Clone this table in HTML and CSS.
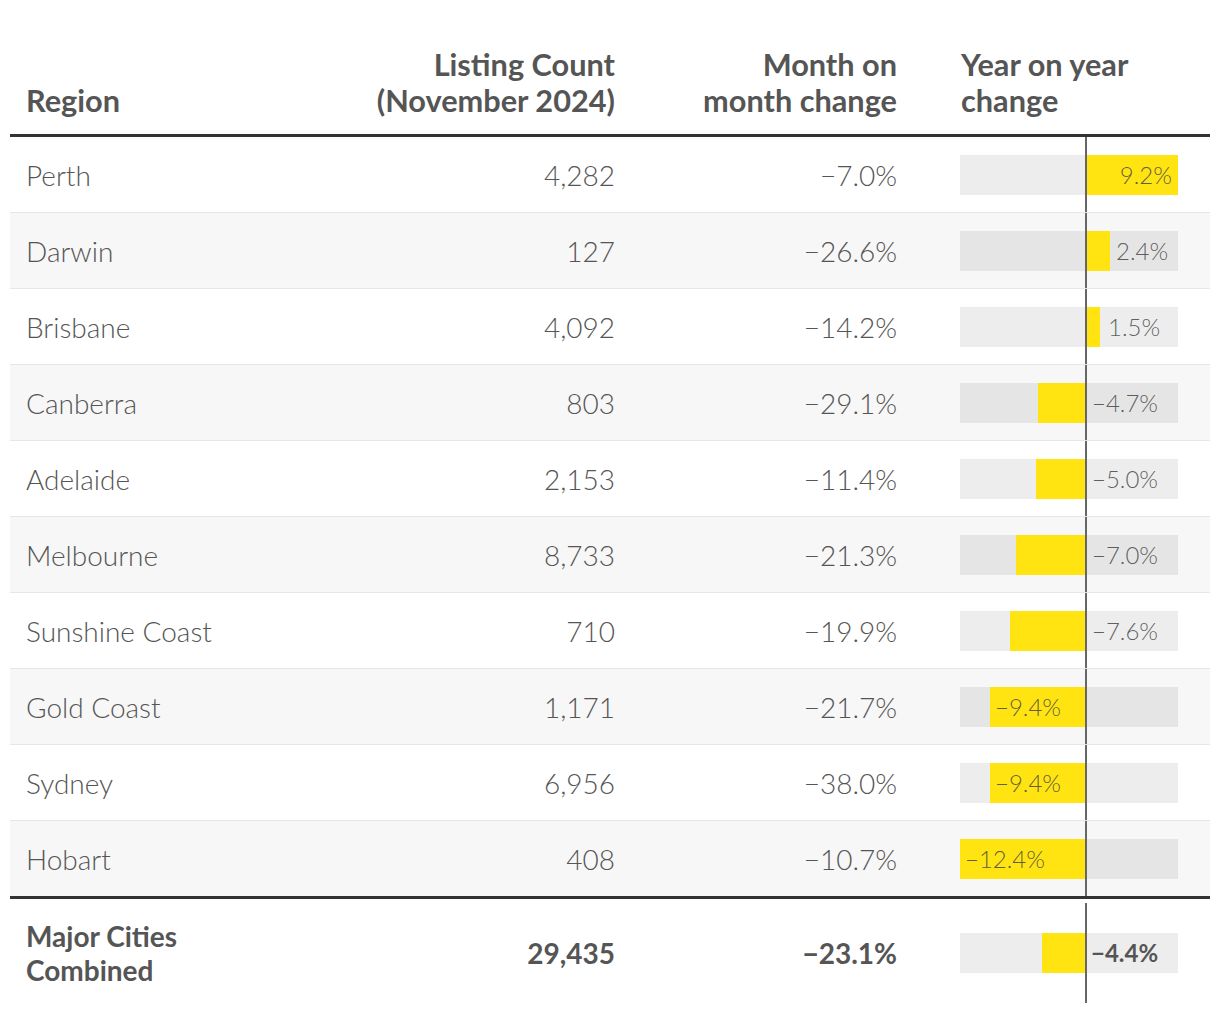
FILE: index.html
```html
<!DOCTYPE html>
<html lang="en">
<head>
<meta charset="utf-8">
<title>Listing Count by Region</title>
<link rel="stylesheet" href="styles.css">
</head>
<body>
<div class="wrap">
<table class="tbl">
  <colgroup>
    <col class="w1"><col class="w2"><col class="w3"><col class="w4">
  </colgroup>
  <thead>
    <tr>
      <th class="region">Region</th>
      <th class="num">Listing Count<br>(November 2024)</th>
      <th class="num">Month on<br>month change</th>
      <th class="yoyh">Year on year<br>change</th>
    </tr>
  </thead>
  <tbody>
    <tr>
      <td class="region">Perth</td><td class="num">4,282</td><td class="num">−7.0%</td>
      <td class="yoy"><div class="bar"><div class="fill" style="left:127px;width:91px"></div><span class="lbl" style="right:6px">9.2%</span></div></td>
    </tr>
    <tr>
      <td class="region">Darwin</td><td class="num">127</td><td class="num">−26.6%</td>
      <td class="yoy"><div class="bar"><div class="fill" style="left:127px;width:23px"></div><span class="lbl" style="left:156px">2.4%</span></div></td>
    </tr>
    <tr>
      <td class="region">Brisbane</td><td class="num">4,092</td><td class="num">−14.2%</td>
      <td class="yoy"><div class="bar"><div class="fill" style="left:127px;width:13px"></div><span class="lbl" style="left:148px">1.5%</span></div></td>
    </tr>
    <tr>
      <td class="region">Canberra</td><td class="num">803</td><td class="num">−29.1%</td>
      <td class="yoy"><div class="bar"><div class="fill" style="left:78px;width:49px"></div><span class="lbl" style="left:132px">−4.7%</span></div></td>
    </tr>
    <tr>
      <td class="region">Adelaide</td><td class="num">2,153</td><td class="num">−11.4%</td>
      <td class="yoy"><div class="bar"><div class="fill" style="left:76px;width:51px"></div><span class="lbl" style="left:132px">−5.0%</span></div></td>
    </tr>
    <tr>
      <td class="region">Melbourne</td><td class="num">8,733</td><td class="num">−21.3%</td>
      <td class="yoy"><div class="bar"><div class="fill" style="left:56px;width:71px"></div><span class="lbl" style="left:132px">−7.0%</span></div></td>
    </tr>
    <tr>
      <td class="region">Sunshine Coast</td><td class="num">710</td><td class="num">−19.9%</td>
      <td class="yoy"><div class="bar"><div class="fill" style="left:50px;width:77px"></div><span class="lbl" style="left:132px">−7.6%</span></div></td>
    </tr>
    <tr>
      <td class="region">Gold Coast</td><td class="num">1,171</td><td class="num">−21.7%</td>
      <td class="yoy"><div class="bar"><div class="fill" style="left:30px;width:97px"></div><span class="lbl" style="left:35px">−9.4%</span></div></td>
    </tr>
    <tr>
      <td class="region">Sydney</td><td class="num">6,956</td><td class="num">−38.0%</td>
      <td class="yoy"><div class="bar"><div class="fill" style="left:30px;width:97px"></div><span class="lbl" style="left:35px">−9.4%</span></div></td>
    </tr>
    <tr>
      <td class="region">Hobart</td><td class="num">408</td><td class="num">−10.7%</td>
      <td class="yoy"><div class="bar"><div class="fill" style="left:0px;width:127px"></div><span class="lbl" style="left:5px">−12.4%</span></div></td>
    </tr>
  </tbody>
  <tfoot>
    <tr>
      <td class="region">Major Cities<br>Combined</td><td class="num">29,435</td><td class="num">−23.1%</td>
      <td class="yoy"><div class="bar"><div class="fill" style="left:82px;width:45px"></div><span class="lbl" style="left:131px">−4.4%</span></div></td>
    </tr>
  </tfoot>
</table>
</div>
</body>
</html>
```
FILE: styles.css
```css
html, body {
  margin: 0;
  padding: 0;
  background: #ffffff;
}

.wrap {
  padding: 35px 10px 0;
  font-family: "Lato", "Liberation Sans", sans-serif;
  color: #555555;
}

.tbl {
  width: 1200px;
  table-layout: fixed;
  border-collapse: separate;
  border-spacing: 0;
}

.w1 { width: 320px; }
.w2 { width: 300px; }
.w3 { width: 282px; }
.w4 { width: 298px; }

.tbl th {
  font-weight: 700;
  font-size: 30.7px;
  line-height: 36px;
  padding: 12px 15px 15px 16px;
  vertical-align: bottom;
  text-align: left;
  border-bottom: 3px solid #333333;
  color: #555555;
}

.tbl th.region { padding-left: 16px; }
.tbl th.num { text-align: right; }
.tbl th.yoyh { padding-left: 49px; }

.tbl td {
  font-family: "Lato Light", "Lato", "Liberation Sans", sans-serif;
  font-weight: 300;
  font-size: 28px;
  line-height: 34px;
  height: 76px;
  padding: 0 15px 0 16px;
  vertical-align: middle;
  border-bottom: 1px solid #e6e6e6;
  box-sizing: border-box;
}

.tbl tbody tr:nth-child(even) td { background: #f7f7f7; }
.tbl tbody tr:last-child td { border-bottom: none; height: 75px; }

.tbl td.region { padding-left: 16px; }
.tbl td.num { text-align: right; }

.tbl td.yoy {
  position: relative;
  padding-left: 48px;
  padding-right: 0;
}

.tbl td.yoy::after {
  content: "";
  position: absolute;
  left: 173px;
  top: 0;
  bottom: 0;
  width: 2px;
  background: #666666;
  z-index: 2;
}

.tbl tfoot td {
  font-family: "Lato", "Liberation Sans", sans-serif;
  font-weight: 700;
  border-top: 3px solid #333333;
  border-bottom: none;
  height: 111px;
}

.tbl tfoot td.yoy::after {
  top: 4px;
  bottom: 4px;
}

.bar {
  position: relative;
  width: 218px;
  height: 40px;
  background: rgba(0, 0, 0, 0.07);
}

.fill {
  position: absolute;
  top: 0;
  bottom: 0;
  background: #ffe411;
}

.lbl {
  position: absolute;
  top: 0;
  line-height: 40px;
  font-size: 24px;
  font-weight: 300;
  color: rgba(70, 70, 70, 0.85);
  white-space: nowrap;
}

.tbl tfoot .lbl {
  font-weight: 700;
  color: #555555;
}
```
